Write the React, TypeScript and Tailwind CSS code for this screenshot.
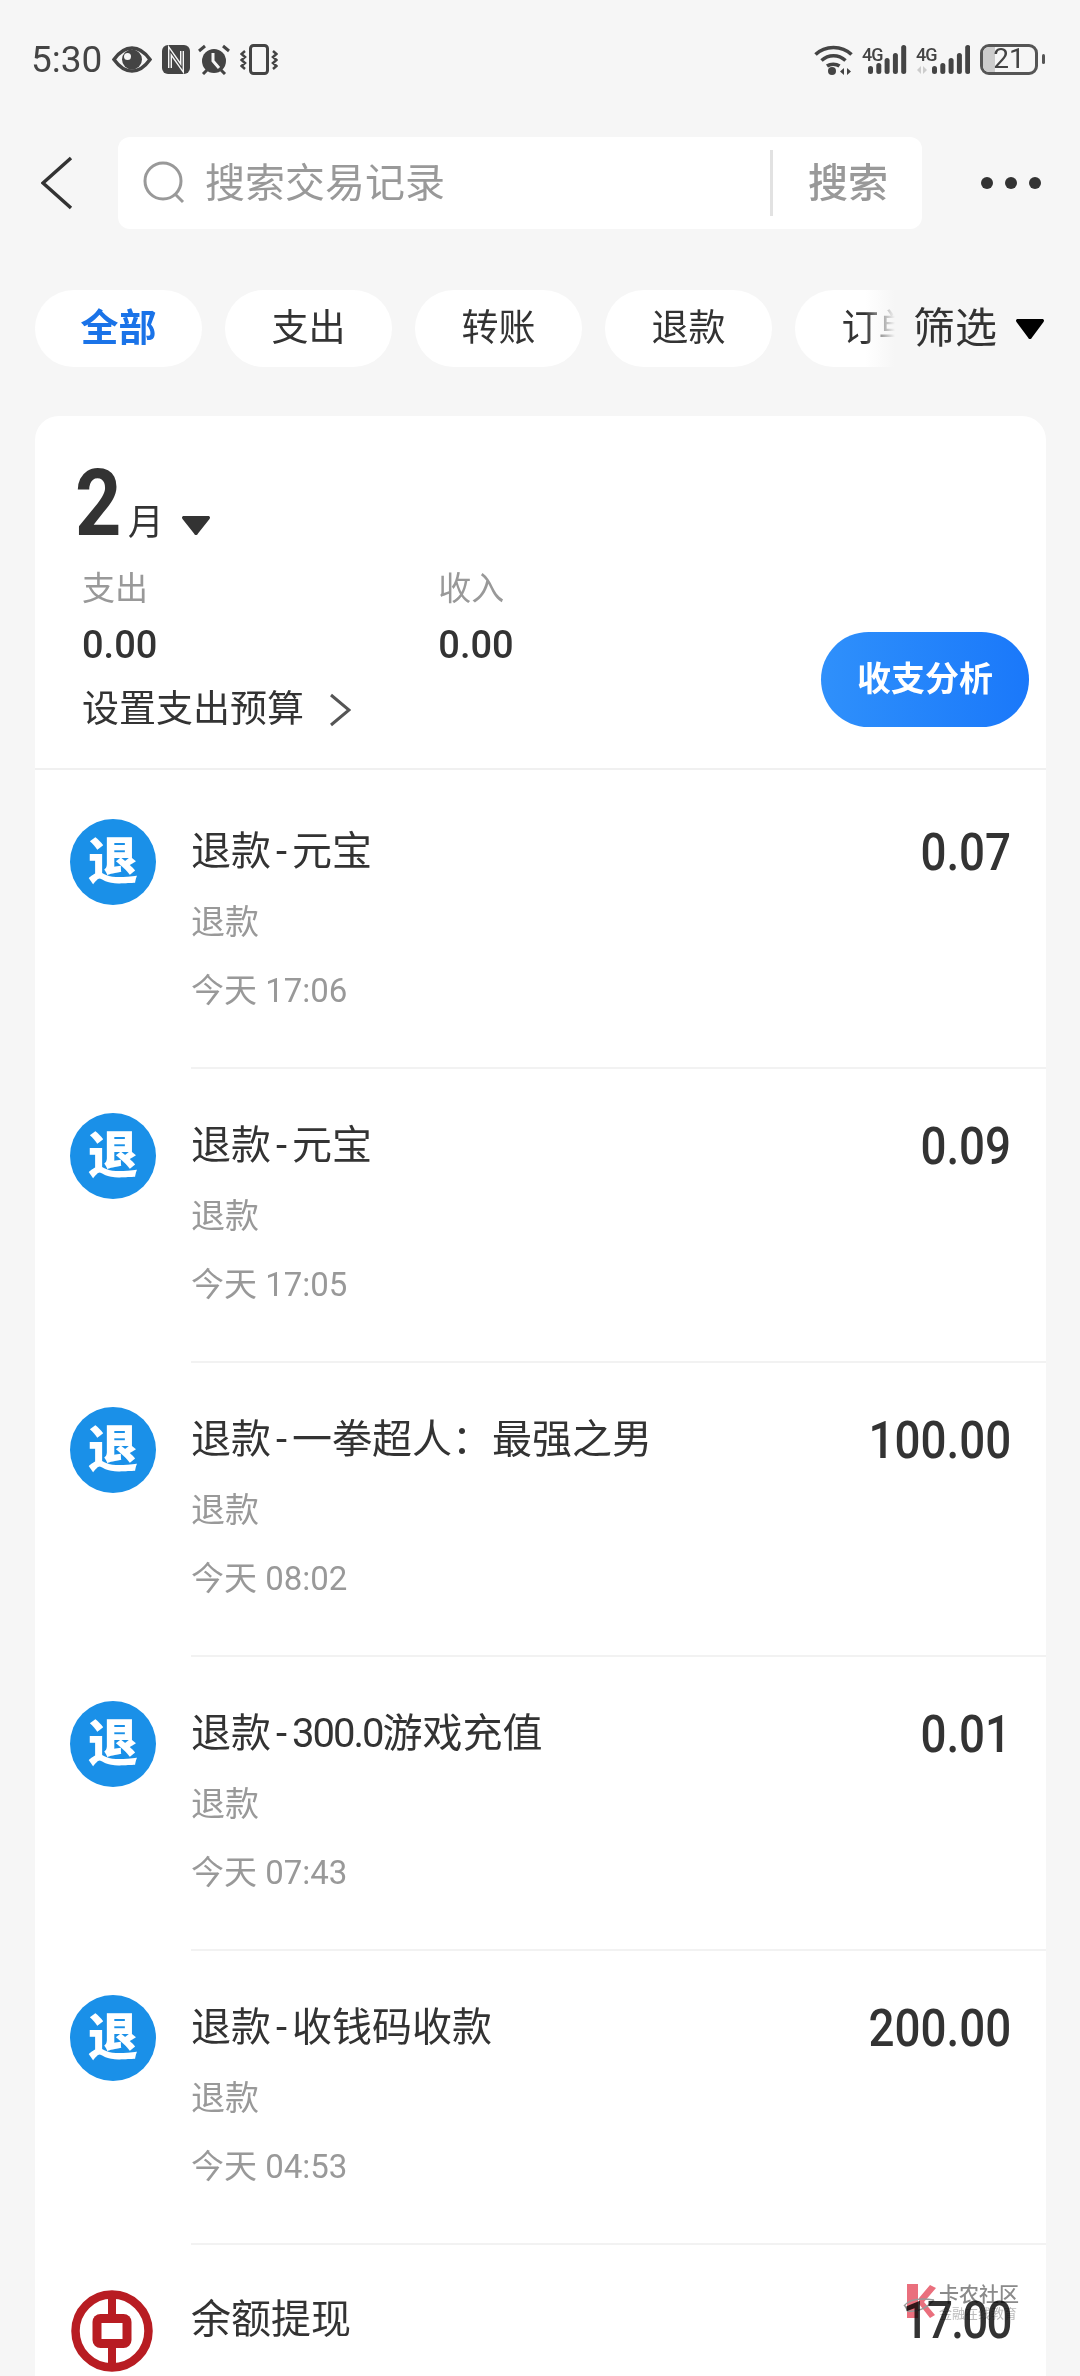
const cjk = "font-['Roboto','Noto_Sans_CJK_SC',sans-serif]";

const rows = [
  { title: '退款-元宝', amount: '0.07', time: '今天 17:06' },
  { title: '退款-元宝', amount: '0.09', time: '今天 17:05' },
  { title: '退款-一拳超人：最强之男', amount: '100.00', time: '今天 08:02' },
  { title: '退款-300.0游戏充值', amount: '0.01', time: '今天 07:43' },
  { title: '退款-收钱码收款', amount: '200.00', time: '今天 04:53' },
];

function StatusLeft() {
  return (
    <div className="flex items-center text-[#444]">
      <span className="text-[37px] leading-none w-[72px]">5:30</span>
      <svg className="ml-[9px]" width="40" height="27" viewBox="0 0 40 27">
        <path d="M2 13.5C8 5 14 2 20 2s12 3 18 11.5C32 22 26 25 20 25S8 22 2 13.5z" fill="none" stroke="#444" strokeWidth="3.5" />
        <circle cx="20" cy="13.5" r="10" fill="#444" />
        <circle cx="15.5" cy="10.5" r="3.5" fill="#f6f6f6" />
      </svg>
      <svg className="ml-[10px]" width="28" height="29" viewBox="0 0 28 29">
        <rect x="0" y="0" width="28" height="29" rx="6" fill="#444" />
        <path d="M8 23V6l12 17V6" fill="none" stroke="#f6f6f6" strokeWidth="4" />
        <path d="M8 23V6l12 17V6" fill="none" stroke="#444" strokeWidth="1.2" />
      </svg>
      <svg className="ml-[8px]" width="32" height="31" viewBox="0 0 32 31">
        <circle cx="16" cy="17" r="12" fill="#444" />
        <path d="M15 9v8l6 7" fill="none" stroke="#f6f6f6" strokeWidth="3" />
        <path d="M1 7l6-5M31 7l-6-5M5 30l4-4M27 30l-4-4" stroke="#444" strokeWidth="3" />
      </svg>
      <svg className="ml-[10px]" width="38" height="31" viewBox="0 0 38 31">
        <rect x="10.5" y="1.5" width="17" height="28" rx="3" fill="none" stroke="#444" strokeWidth="3" />
        <path d="M5 7L1.5 10 5 13l-3.500 3L5 19l-3.500 3L5 25M33 7l3.500 3L33 13l3.500 3L33 19l3.500 3L33 25" fill="none" stroke="#444" strokeWidth="2.500" />
      </svg>
    </div>
  );
}

function Bars({ x }: { x: number }) {
  const tops = [22, 19, 14, 9, 1];
  return (
    <>
      {tops.map((t, i) => (
        <rect key={i} x={x + i * 8.3} y={t} width="5" height={30 - t} rx="2.500" fill="#444" />
      ))}
    </>
  );
}

function SignalOne() {
  return (
    <div className="relative w-[45px] h-[31px]">
      <span className="absolute left-0 top-[2px] text-[18px] font-medium leading-none text-[#444] tracking-[-1px]">4G</span>
      <svg width="45" height="31" viewBox="0 0 45 31">
        <Bars x={6} />
      </svg>
    </div>
  );
}

function SignalTwo() {
  return (
    <div className="relative w-[54px] h-[31px]">
      <span className="absolute left-0 top-[2px] text-[18px] font-medium leading-none text-[#444] tracking-[-1px]">4G</span>
      <svg width="54" height="31" viewBox="0 0 54 31">
        <path d="M5 22l-4 4 4 4zM7 22l4 4-4 4z" fill="#ccc" />
        <Bars x={16} />
      </svg>
    </div>
  );
}

function StatusRight() {
  return (
    <div className="flex items-center gap-[9px] text-[#444]">
      <svg width="39" height="31" viewBox="0 0 39 31">
        <path d="M1.500 10.500C11 1 28 1 37.500 10.500M7.500 16.500c7-6.500 17-6.500 24 0M13 22c3.500-2.500 9-2.500 12.500 0" fill="none" stroke="#444" strokeWidth="3.500" />
        <circle cx="18" cy="27" r="4" fill="#444" />
        <path d="M30 24l-4 3.500 4 3.500zM33 24l4 3.500-4 3.500z" fill="#444" />
      </svg>
      <SignalOne />
      <SignalTwo />
      <div className="flex items-center gap-[4px] ml-[1px]">
        <div className="relative w-[58px] h-[31px] rounded-[9px] border-[3px] border-[#555] overflow-hidden flex items-center justify-center">
          <div className="absolute left-0 top-0 bottom-0 w-[12px] bg-[#ccc]" />
          <span className="relative text-[28px] leading-none text-[#444]">21</span>
        </div>
        <div className="w-[3px] h-[10px] rounded-full bg-[#555]" />
      </div>
    </div>
  );
}

function RefundIcon() {
  return (
    <div className="w-[86px] h-[86px] rounded-full bg-[#1a90e8] flex items-center justify-center text-white text-[50px] font-black leading-none">
      退
    </div>
  );
}

function BankLogo() {
  return (
    <svg width="82" height="82" viewBox="0 0 82 82">
      <circle cx="41" cy="41" r="36.500" fill="none" stroke="#b81c22" strokeWidth="8.500" />
      <path d="M41 3v76" stroke="#b81c22" strokeWidth="8" />
      <rect x="21.500" y="24" width="39" height="34" rx="8" fill="#b81c22" />
      <rect x="30.500" y="33" width="21" height="16" fill="#fff" />
    </svg>
  );
}

function Watermark() {
  return (
    <div className="absolute left-[868px] top-[39px] flex mix-blend-multiply">
      <svg width="36" height="36" viewBox="0 0 36 36">
        <path d="M4 0h11v34H4z" fill="#ea6f7d" />
        <path d="M16 14L27 1l6 3-12 14 11 13-5 3-11-14z" fill="#ea6f7d" />
        <path d="M1 22c6-8 18-8 30-6M2 22l3 5c8 1 18-2 26-11" fill="none" stroke="#999" strokeWidth="1.500" />
      </svg>
      <div className="w-[80px]">
        <div className="text-[20px] leading-[22px] font-medium text-[#8a8a8a]">卡农社区</div>
        <div className="text-[13px] leading-[16px] text-[#bbb]">金融在线教育</div>
      </div>
    </div>
  );
}

function Amount({ value, tight }: { value: string; tight?: boolean }) {
  return (
    <div className={`mt-[1px] text-[52px] leading-[58px] font-medium text-[#333] scale-x-[0.88] origin-right ${tight ? 'tracking-[-2px]' : ''}`}>
      {value}
    </div>
  );
}

function Title({ text }: { text: string }) {
  const [head, rest] = text.split('-');
  const digits = rest.match(/^[\d.]+/)?.[0] ?? '';
  return (
    <div className="text-[40px] leading-[58px] text-[#333]">
      {head}
      <span className="mx-[5px]">-</span>
      {digits && <span className="tracking-[-2px]">{digits}</span>}
      {rest.slice(digits.length)}
    </div>
  );
}

function Row({ title, amount, time }: { title: string; amount: string; time: string }) {
  return (
    <div className="flex h-[294px]">
      <div className="w-[156px] pl-[35px] pt-[44px] shrink-0">
        <RefundIcon />
      </div>
      <div className="flex-1 border-b-2 border-[#f2f2f2] pt-[48px] flex justify-between pr-[35px]">
        <div>
          <Title text={title} />
          <div className="text-[34px] leading-[46px] mt-[18px] text-[#999]">退款</div>
          <div className="text-[33px] leading-[46px] mt-[23px] text-[#999]">{time}</div>
        </div>
        <Amount value={amount} />
      </div>
    </div>
  );
}

export default function App() {
  return (
    <div className={`h-[2376px] overflow-hidden bg-[#f6f6f6] ${cjk}`}>
      <div className="h-[118px] flex items-center justify-between pl-[31px] pr-[35px]">
        <StatusLeft />
        <StatusRight />
      </div>

      <div className="flex items-center h-[92px] mt-[19px] pl-[41px]">
        <svg width="32" height="54" viewBox="0 0 32 54">
          <path d="M30 2L2 27l28 25" fill="none" stroke="#333" strokeWidth="3.500" />
        </svg>
        <div className="ml-[45px] w-[804px] h-[92px] bg-white rounded-[12px] flex items-center pl-[25px]">
          <svg width="44" height="44" viewBox="0 0 44 44">
            <circle cx="20" cy="20" r="18" fill="none" stroke="#999" strokeWidth="3" />
            <path d="M32 33l8 8" stroke="#999" strokeWidth="3" />
          </svg>
          <span className="ml-[18px] mt-[2px] text-[40px] text-[#999] w-[565px] leading-none">搜索交易记录</span>
          <div className="w-[3px] h-[66px] bg-[#e2e2e2]" />
          <span className="ml-[35px] mt-[2px] text-[40px] font-medium text-[#999] leading-none">搜索</span>
        </div>
        <div className="ml-[59px] flex gap-[12px]">
          <div className="w-[12px] h-[12px] rounded-full bg-[#333]" />
          <div className="w-[12px] h-[12px] rounded-full bg-[#333]" />
          <div className="w-[12px] h-[12px] rounded-full bg-[#333]" />
        </div>
      </div>

      <div className="relative mt-[61px] h-[77px] flex pl-[35px] gap-[23px] overflow-hidden">
        <div className="w-[167px] shrink-0 rounded-full bg-white flex items-center justify-center text-[38px] font-bold text-[#1a73e8]">全部</div>
        {['支出', '转账', '退款', '订单'].map((t) => (
          <div key={t} className="w-[167px] shrink-0 rounded-full bg-white flex items-center justify-center text-[37px] text-[#333]">{t}</div>
        ))}
        <div className="absolute right-0 top-0 bottom-0 w-[185px] flex items-center bg-[#f6f6f6] pl-[18px]">
          <div className="absolute left-[-30px] top-0 bottom-0 w-[30px] bg-gradient-to-r from-transparent to-[#f6f6f6]" />
          <span className="text-[42px] text-[#333] leading-none">筛选</span>
          <svg className="ml-[19px]" width="28" height="20" viewBox="0 0 28 20">
            <path d="M2 0h24c2 0 2.500 1.500 1.500 3L16 18.500c-1 2-3 2-4 0L.500 3C-.500 1.500 0 0 2 0z" fill="#000" />
          </svg>
        </div>
      </div>

      <div className="ml-[35px] mr-[34px] mt-[49px] bg-white rounded-t-[24px] h-[2000px]">
        <div className="relative h-[354px] border-b-2 border-[#f0f0f0]">
          <div className="absolute left-[40px] top-[38px] flex items-baseline">
            <span className="text-[92px] font-bold text-[#333] leading-[100px] scale-x-[0.88] origin-left">2</span>
            <span className="text-[36px] text-[#333]">月</span>
            <svg className="ml-[18px] mb-[2px]" width="28" height="19" viewBox="0 0 28 19">
              <path d="M2 0h24c2 0 2.500 1.500 1.500 3L16 17.500c-1 2-3 2-4 0L.500 3C-.500 1.500 0 0 2 0z" fill="#333" />
            </svg>
          </div>
          <div className="absolute left-[47px] top-[151px] flex gap-[281px]">
            <div>
              <div className="text-[33px] leading-[44px] text-[#999]">支出</div>
              <div className="text-[38px] leading-[44px] mt-[12px] font-medium text-[#333]">0.00</div>
            </div>
            <div>
              <div className="text-[33px] leading-[44px] text-[#999]">收入</div>
              <div className="text-[38px] leading-[44px] mt-[12px] font-medium text-[#333]">0.00</div>
            </div>
          </div>
          <div className="absolute left-[47px] top-[267px] flex items-center text-[37px] leading-[54px] text-[#333]">
            设置支出预算
            <svg className="ml-[25px]" width="22" height="34" viewBox="0 0 22 34">
              <path d="M2 2l18 15L2 32" fill="none" stroke="#555" strokeWidth="3" />
            </svg>
          </div>
          <div className="absolute right-[17px] top-[216px] w-[208px] h-[95px] rounded-full bg-gradient-to-r from-[#2f90fb] to-[#1a78fa] flex items-center justify-center text-[34px] font-bold text-white">
            收支分析
          </div>
        </div>

        <div className="pt-[5px]">
          {rows.map((r, i) => (
            <Row key={i} {...r} />
          ))}

          <div className="relative flex">
            <div className="w-[156px] pl-[36px] pt-[45px] shrink-0">
              <BankLogo />
            </div>
            <div className="flex-1 pt-[46px] flex justify-between pr-[35px]">
              <div className="text-[40px] leading-[58px] text-[#333]">余额提现</div>
              <Amount value="17.00" tight />
            </div>
            <Watermark />
          </div>
        </div>
      </div>
    </div>
  );
}
